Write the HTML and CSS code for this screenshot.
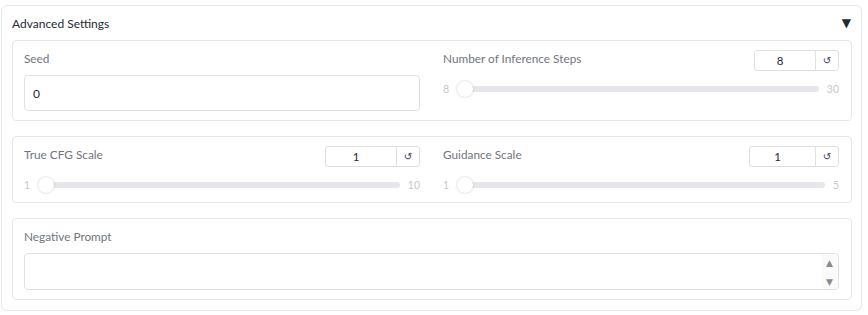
FILE: index.html
```html
<!DOCTYPE html>
<html lang="en">
<head>
    <meta charset="UTF-8">
    <title>Advanced Settings</title>
    <link rel="stylesheet" href="styles.css">
</head>
<body>
    <div class="accordion">
        <div class="acc-head">
            <span class="acc-title">Advanced Settings</span>
            <span class="acc-arrow">&#9660;</span>
        </div>

        <div class="acc-body">
            <div class="box row">
                <div class="col">
                    <div class="field-head"><span class="label">Seed</span></div>
                    <input class="text-in" type="text" value="0">
                </div>
                <div class="col">
                    <div class="field-head">
                        <span class="label">Number of Inference Steps</span>
                        <div class="num">
                            <span class="num-val">8</span>
                            <span class="num-reset">&#8634;</span>
                        </div>
                    </div>
                    <div class="slider">
                        <span class="lim">8</span>
                        <div class="track"><span class="thumb"></span></div>
                        <span class="lim">30</span>
                    </div>
                </div>
            </div>

            <div class="box row">
                <div class="col">
                    <div class="field-head">
                        <span class="label">True CFG Scale</span>
                        <div class="num num-wide">
                            <span class="num-val">1</span>
                            <span class="num-reset">&#8634;</span>
                        </div>
                    </div>
                    <div class="slider">
                        <span class="lim">1</span>
                        <div class="track"><span class="thumb"></span></div>
                        <span class="lim">10</span>
                    </div>
                </div>
                <div class="col">
                    <div class="field-head">
                        <span class="label">Guidance Scale</span>
                        <div class="num num-mid">
                            <span class="num-val">1</span>
                            <span class="num-reset">&#8634;</span>
                        </div>
                    </div>
                    <div class="slider">
                        <span class="lim">1</span>
                        <div class="track"><span class="thumb"></span></div>
                        <span class="lim">5</span>
                    </div>
                </div>
            </div>

            <div class="box">
                <div class="field-head"><span class="label">Negative Prompt</span></div>
                <div class="area">
                    <textarea class="area-in"></textarea>
                    <div class="scroll">
                        <span>&#9650;</span>
                        <span>&#9660;</span>
                    </div>
                </div>
            </div>
        </div>
    </div>
</body>
</html>
```

FILE: styles.css
```css
body{
    margin: 0;
    background: #ffffff;
    font-family: "Lato", "Noto Sans", sans-serif;
    font-size: 12px;
}

.accordion{
    margin: 5px 6px 0 1px;
    border: 1px solid #e5e7eb;
    border-radius: 6px;
    padding: 0 9px 10px 10px;
}

.acc-head{
    height: 34px;
    display: flex;
    align-items: center;
    justify-content: space-between;
}

.acc-title{
    color: #1f2937;
    font-size: 12px;
}

.acc-arrow{
    color: #1f2937;
    font-family: "DejaVu Sans", sans-serif;
    font-size: 12px;
    margin-right: 1px;
}

.acc-body{
    display: flex;
    flex-direction: column;
    gap: 15px;
}

.box{
    border: 1px solid #e5e7eb;
    border-radius: 4px;
    padding: 9px 12px 9px 11px;
}

.row{
    display: flex;
    gap: 23px;
}

.col{
    flex: 1;
    display: flex;
    flex-direction: column;
}

.field-head{
    height: 21px;
    display: flex;
    align-items: center;
    justify-content: space-between;
    margin-bottom: 4px;
}

.label{
    color: #71757e;
    font-size: 11.8px;
    margin-top: -4px;
}

.text-in{
    height: 36px;
    box-sizing: border-box;
    border: 1px solid #e0e0e0;
    border-radius: 4px;
    padding: 0 8px;
    font-family: inherit;
    font-size: 12px;
    color: #1f2937;
    outline: none;
}

.num{
    display: flex;
    height: 21px;
    box-sizing: border-box;
    border: 1px solid #e0e0e0;
    border-radius: 3px;
    width: 85px;
}

.num-mid{
    width: 90px;
}

.num-wide{
    width: 95px;
}

.num-val{
    flex: 1;
    text-align: center;
    padding-right: 10px;
    line-height: 19px;
    font-size: 11.5px;
    color: #1f2937;
}

.num-reset{
    width: 22px;
    border-left: 1px solid #e0e0e0;
    text-align: center;
    line-height: 19px;
    font-family: "DejaVu Sans", sans-serif;
    font-size: 10px;
    color: #374151;
}

.slider{
    display: flex;
    align-items: center;
    gap: 8px;
    height: 16px;
    margin-top: 6px;
}

.lim{
    color: #c4c7cc;
    font-size: 10.5px;
}

.track{
    flex: 1;
    height: 6px;
    border-radius: 3px;
    background: #e5e7eb;
    display: flex;
    align-items: center;
}

.thumb{
    width: 16px;
    height: 16px;
    border-radius: 50%;
    background: #ffffff;
    box-shadow: 0 0 2px rgba(0, 0, 0, 0.25);
}

.area{
    display: flex;
    height: 37px;
    box-sizing: border-box;
    border: 1px solid #e0e0e0;
    border-radius: 4px;
}

.area-in{
    flex: 1;
    border: none;
    resize: none;
    outline: none;
    background: transparent;
}

.scroll{
    width: 15px;
    margin-right: 1px;
    background: #fafafa;
    display: flex;
    flex-direction: column;
    justify-content: space-between;
    align-items: center;
    padding: 4px 0 2px;
    font-family: "DejaVu Sans", sans-serif;
    font-size: 9px;
    color: #8a8a8a;
}
```
